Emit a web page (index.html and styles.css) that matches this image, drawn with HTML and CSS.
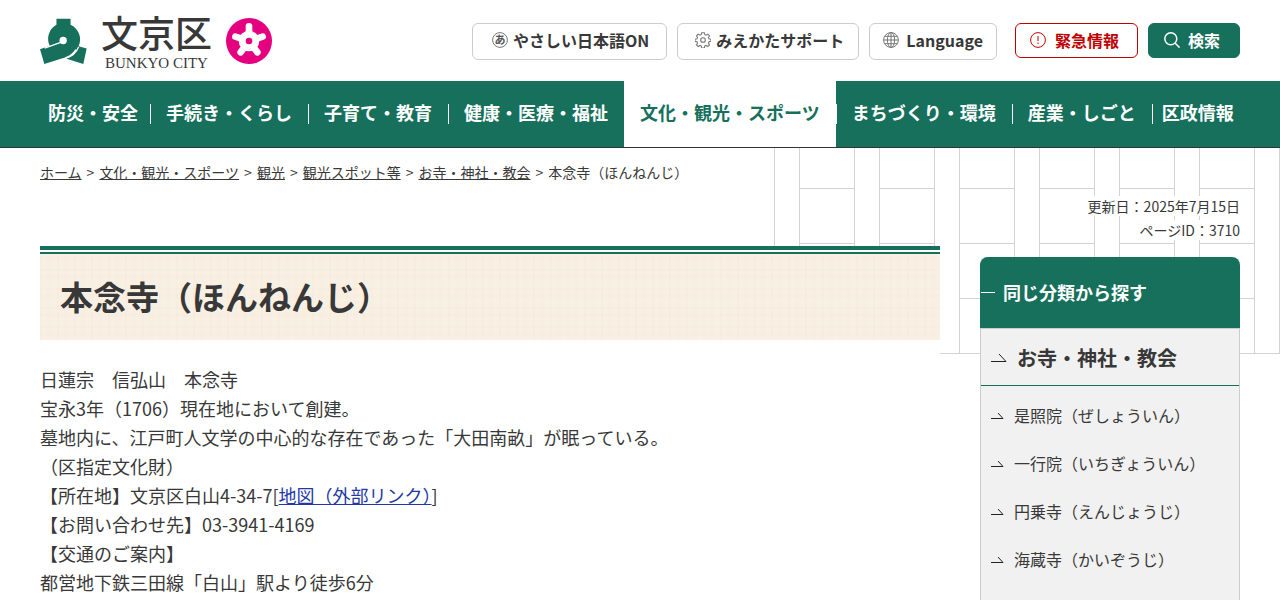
FILE: index.html
```html
<!DOCTYPE html>
<html lang="ja">
<head>
    <meta charset="UTF-8">
    <meta name="viewport" content="width=device-width, initial-scale=1.0">
    <title>文京区 本念寺（ほんねんじ）</title>
    <link rel="stylesheet" href="styles.css">
</head>
<body>
    <header class="header">
        <a class="logo" href="#">
            <svg class="logo-mark" viewBox="30 52 140 140" aria-hidden="true">
                <path fill="#17705c" d="M79 54h42v18a48 48 0 0 1 24 64l24 7-10 46-52-16c16-5 26-14 32-26l-4-2c-8 14-22 22-38 27L43 189 30 145l29-10a48 48 0 0 1 20-63z"/>
                <path fill="none" stroke="#fff" stroke-width="4" d="M44 142l52-19M104 173c20-5 34-16 41-35"/>
                <circle cx="99" cy="119" r="11" fill="#fff"/>
            </svg>
            <span class="logo-text">
                <span class="logo-name">文京区</span>
                <span class="logo-en">BUNKYO CITY</span>
            </span>
            <svg class="logo-badge" viewBox="0 0 138 138" aria-hidden="true">
                <circle cx="69" cy="69" r="69" fill="#e5007f"/>
                <path fill="none" stroke="#fff" stroke-width="20" stroke-linecap="round" d="M69 69V25M69 69l41-13M69 69l25 34M69 69l-25 34M69 69L28 56"/>
                <circle cx="69" cy="69" r="31" fill="#fff"/>
                <circle cx="69" cy="69" r="10" fill="#e5007f"/>
            </svg>
        </a>

        <div class="tools">
            <a class="tool" href="#">
                <svg class="icon" viewBox="0 0 16 16" aria-hidden="true">
                    <circle cx="8" cy="8" r="7.4"/>
                    <text class="icon-char" x="8" y="12" text-anchor="middle">あ</text>
                </svg>
                やさしい日本語ON
            </a>
            <a class="tool tool-view" href="#">
                <svg class="icon" viewBox="0 0 24 24" aria-hidden="true">
                    <circle cx="12" cy="12" r="3.5" stroke-width="1.6"/>
                    <path stroke-width="1.6" d="M10 1h4l.7 3 2 .8 2.6-1.600 2.500 2.500-1.600 2.600.8 2 3 .7v3l-3 .7-.8 2 1.600 2.600-2.500 2.500-2.600-1.600-2 .8-.7 3h-4l-.7-3-2-.8-2.600 1.600-2.500-2.500 1.600-2.600-.8-2-3-.7v-3l3-.7.8-2-1.600-2.600 2.500-2.500 2.600 1.600 2-.8z"/>
                </svg>
                みえかたサポート
            </a>
            <button class="tool tool-lang" type="button">
                <svg class="icon" viewBox="0 0 16 16" aria-hidden="true">
                    <circle cx="8" cy="8" r="7.4"/>
                    <ellipse cx="8" cy="8" rx="3.6" ry="7.4"/>
                    <path d="M8 .6v14.8M.6 8h14.8M1.8 4.3h12.4M1.8 11.7h12.4"/>
                </svg>
                Language
            </button>
            <a class="tool tool-emergency" href="#">
                <svg class="icon" viewBox="0 0 16 16" aria-hidden="true">
                    <circle cx="8" cy="8" r="7.4"/>
                    <path d="M8 4v5M8 10.5v1.5"/>
                </svg>
                緊急情報
            </a>
            <button class="tool tool-search" type="button">
                <svg class="icon" viewBox="0 0 16 16" aria-hidden="true">
                    <circle cx="6.8" cy="6.8" r="6"/>
                    <path d="M11.2 11.2l4.4 4.4"/>
                </svg>
                検索
            </button>
        </div>
    </header>

    <nav class="nav">
        <ul class="nav-list">
            <li><a href="#">防災・安全</a></li>
            <li><a href="#">手続き・くらし</a></li>
            <li><a href="#">子育て・教育</a></li>
            <li><a href="#">健康・医療・福祉</a></li>
            <li class="current"><a href="#">文化・観光・スポーツ</a></li>
            <li><a href="#">まちづくり・環境</a></li>
            <li><a href="#">産業・しごと</a></li>
            <li><a href="#">区政情報</a></li>
        </ul>
    </nav>

    <div class="page">
        <div class="left">
            <p class="breadcrumb">
                <a href="#">ホーム</a><span>&gt;</span><a href="#">文化・観光・スポーツ</a><span>&gt;</span><a href="#">観光</a><span>&gt;</span><a href="#">観光スポット等</a><span>&gt;</span><a href="#">お寺・神社・教会</a><span>&gt;</span>本念寺（ほんねんじ）
            </p>
            <main class="content">
                <h1 class="title">本念寺（ほんねんじ）</h1>
                <p class="text">
                    日蓮宗　信弘山　本念寺<br>
                    宝永3年（1706）現在地において創建。<br>
                    墓地内に、江戸町人文学の中心的な存在であった「大田南畝」が眠っている。<br>
                    （区指定文化財）<br>
                    【所在地】文京区白山4-34-7[<a href="#">地図（外部リンク）</a>]<br>
                    【お問い合わせ先】03-3941-4169<br>
                    【交通のご案内】<br>
                    都営地下鉄三田線「白山」駅より徒歩6分
                </p>
            </main>
        </div>

        <aside class="side">
            <div class="page-info">
                <p><span>更新日：2025年7月15日</span></p>
                <p><span>ページID：3710</span></p>
            </div>
            <h2 class="side-title">同じ分類から探す</h2>
            <div class="side-body">
                <h3 class="side-category">
                    <svg class="arrow-big" viewBox="0 0 16 9" aria-hidden="true"><path d="M0 8.5h15L8 1"/></svg>
                    <a href="#">お寺・神社・教会</a>
                </h3>
                <ul class="side-list">
                    <li><svg class="arrow" viewBox="0 0 13 7" aria-hidden="true"><path d="M0 6.5h12L7 1"/></svg><a href="#">是照院（ぜしょういん）</a></li>
                    <li><svg class="arrow" viewBox="0 0 13 7" aria-hidden="true"><path d="M0 6.5h12L7 1"/></svg><a href="#">一行院（いちぎょういん）</a></li>
                    <li><svg class="arrow" viewBox="0 0 13 7" aria-hidden="true"><path d="M0 6.5h12L7 1"/></svg><a href="#">円乗寺（えんじょうじ）</a></li>
                    <li><svg class="arrow" viewBox="0 0 13 7" aria-hidden="true"><path d="M0 6.5h12L7 1"/></svg><a href="#">海蔵寺（かいぞうじ）</a></li>
                </ul>
            </div>
        </aside>
    </div>
</body>
</html>
```

FILE: styles.css
```css
* {
    box-sizing: border-box;
}

body {
    margin: 0;
    background-color: #fff;
    color: #383838;
    font-family: "Noto Sans CJK JP", sans-serif;
    font-size: 18px;
}

h1, h2, h3, p, ul {
    margin: 0;
    padding: 0;
}

ul {
    list-style: none;
}

a {
    color: inherit;
}

/* ヘッダー */
.header {
    max-width: 1200px;
    height: 81px;
    margin: 0 auto;
    padding-top: 1px;
    display: flex;
    justify-content: space-between;
    align-items: center;
}

.logo {
    display: flex;
    align-items: center;
    gap: 14px;
    text-decoration: none;
}

.logo-mark {
    width: 47px;
    height: 47px;
}

.logo-badge {
    width: 46px;
    height: 46px;
}

.logo-text {
    display: flex;
    flex-direction: column;
    align-items: center;
}

.logo-name {
    font-size: 37px;
    font-weight: 500;
    line-height: 44px;
}

.logo-en {
    font-family: "Liberation Serif", serif;
    font-size: 15px;
    line-height: 18px;
}

.tools {
    display: flex;
    align-items: flex-start;
    gap: 10px;
}

.tool {
    height: 37px;
    padding: 0 17px 3px 19px;
    display: flex;
    align-items: center;
    gap: 5px;
    border: 1px solid #ccc;
    border-radius: 6px;
    background-color: #fff;
    color: #383838;
    font-family: inherit;
    font-size: 16px;
    font-weight: bold;
    line-height: 24px;
    text-decoration: none;
    white-space: nowrap;
}

.tool .icon {
    width: 16px;
    height: 16px;
    fill: none;
    stroke: #777;
    stroke-width: 1;
}

.tool .icon-char {
    fill: #555;
    stroke: none;
    font-size: 11px;
}

.tool-view {
    padding: 0 14px 3px 17px;
}

.tool-lang {
    gap: 7px;
    padding: 0 13px 3px;
}

.tool-emergency {
    height: 35px;
    margin-left: 8px;
    padding: 0 18px 0 14px;
    gap: 9px;
    border-color: #c00000;
    color: #c00000;
}

.tool-search {
    height: 35px;
    padding: 0 19px 0 15px;
    gap: 8px;
    border-color: #17705c;
    background-color: #17705c;
    color: #fff;
}

.tool-emergency .icon {
    stroke: #c00000;
}

.tool-search .icon {
    stroke: #fff;
    stroke-width: 1.5;
}

/* グローバルナビ */
.nav {
    background-color: #17705c;
    border-bottom: 1px solid #333;
}

.nav-list {
    max-width: 1200px;
    margin: 0 auto;
    display: flex;
}

.nav-list li {
    position: relative;
}

.nav-list a {
    display: block;
    padding: 0 16px 4px;
    color: #fff;
    font-weight: bold;
    line-height: 62px;
    text-decoration: none;
    white-space: nowrap;
}

.nav-list li:first-child a {
    padding-left: 8px;
    padding-right: 12px;
}

.nav-list li:last-child a {
    padding-left: 10px;
    padding-right: 6px;
}

.nav-list li + li::before {
    content: "";
    position: absolute;
    left: 0;
    top: 23px;
    width: 1px;
    height: 20px;
    background-color: #fff;
}

.nav-list .current {
    background-color: #fff;
}

.nav-list .current a {
    color: #17705c;
}

/* 本文エリア */
.page {
    position: relative;
    padding: 0 40px;
    display: flex;
    justify-content: center;
    gap: 40px;
}

/* 背景の格子模様 */
.page::before {
    content: "";
    position: absolute;
    z-index: -1;
    top: 0;
    right: 0;
    width: 506px;
    height: 206px;
    background-image:
        linear-gradient(#d3d3d3, #d3d3d3),
        linear-gradient(90deg, #d3d3d3 1px, transparent 1px),
        linear-gradient(90deg, #d3d3d3 1px, transparent 1px),
        linear-gradient(90deg, #fff 25px, transparent 25px),
        linear-gradient(#d3d3d3 1px, transparent 1px);
    background-size: 100% 1px, 80px 100%, 80px 100%, 80px 100%, 100% 55px;
    background-position: 0 100%, 0 0, 25px 0, 0 0, 0 40px;
    background-repeat: no-repeat, repeat, repeat, repeat, repeat;
}

.left {
    flex: 1;
    max-width: 900px;
}

.breadcrumb {
    padding: 12px 0 62px;
    font-size: 14px;
    line-height: 24px;
}

.breadcrumb span {
    margin: 0 5px;
}

.content {
    background-color: #fff;
}

.title {
    padding: 20px 20px 18px;
    border-top: 4px solid #17705c;
    background-color: #f9f0e4;
    background-image:
        linear-gradient(#fff 2px, #17705c 2px, #17705c 4px, transparent 4px),
        repeating-linear-gradient(90deg, rgba(235, 215, 200, 0.12) 0 2px, transparent 2px 7px, rgba(235, 215, 200, 0.08) 7px 11px, transparent 11px 17px),
        repeating-linear-gradient(rgba(235, 215, 200, 0.12) 0 2px, transparent 2px 6px, rgba(235, 215, 200, 0.08) 6px 10px, transparent 10px 19px);
    font-size: 33px;
    font-weight: bold;
    line-height: 52px;
}

.text {
    padding: 25px 0;
    line-height: 29px;
}

.text a {
    color: #2238a8;
}

/* サイド */
.side {
    width: 260px;
}

.page-info {
    padding: 46px 0 15px;
    font-size: 14px;
    line-height: 24px;
    text-align: right;
}

.page-info span {
    background-color: #fff;
}

.side-title {
    padding-right: 10px;
    display: flex;
    align-items: center;
    gap: 8px;
    border-left: 1px solid #17705c;
    border-radius: 8px 8px 0 0;
    background-color: #17705c;
    color: #fff;
    font-size: 18px;
    line-height: 71px;
}

.side-title::before {
    content: "";
    width: 14px;
    height: 1px;
    background-color: #fff;
}

.side-body {
    border: 1px solid #ccc;
    background-color: #f1f1f1;
}

.side-body a {
    text-decoration: none;
}

.side-category {
    padding: 1px 10px 0;
    display: flex;
    align-items: center;
    gap: 10px;
    border-bottom: 1px solid #17705c;
    font-size: 20px;
    font-weight: bold;
    line-height: 55px;
}

.arrow-big {
    width: 16px;
    height: 9px;
}

.arrow {
    width: 13px;
    height: 7px;
}

.arrow-big,
.arrow {
    fill: none;
    stroke: #222;
}

.side-list {
    padding: 5px 10px 20px;
    font-size: 16px;
}

.side-list li {
    display: flex;
    align-items: center;
    gap: 10px;
    line-height: 48px;
}
```
